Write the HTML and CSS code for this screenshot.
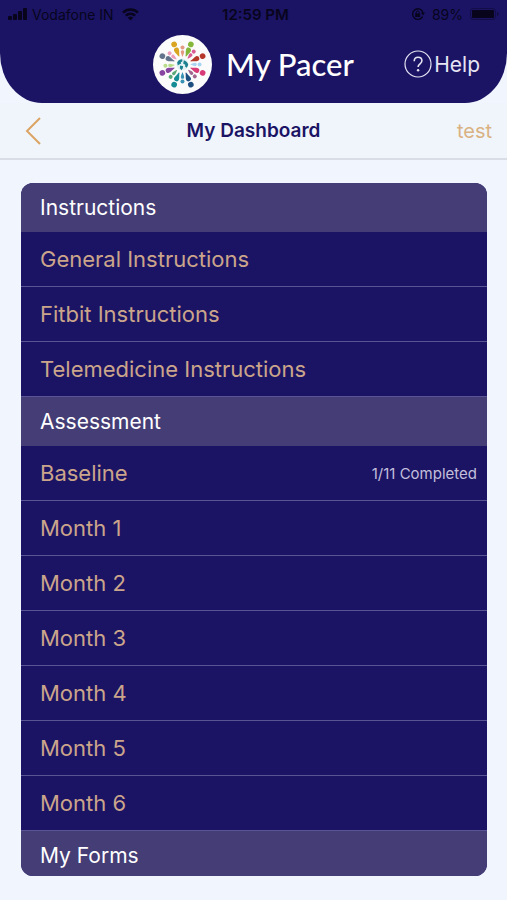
FILE: index.html
```
<!DOCTYPE html>
<html lang="en">
<head>
<meta charset="UTF-8">
<meta name="viewport" content="width=device-width, initial-scale=1">
<title>My Pacer</title>
<link rel="stylesheet" href="styles.css">
</head>
<body>
  <header class="header">
    <div class="status">
      <div class="status-left">
        <svg width="20" height="12" viewBox="0 0 20 12" fill="currentColor">
          <rect x="0" y="8" width="4" height="4" rx="1"/>
          <rect x="5" y="6" width="4" height="6" rx="1"/>
          <rect x="10" y="3" width="4" height="9" rx="1"/>
          <rect x="15" y="0" width="4" height="12" rx="1"/>
        </svg>
        <span>Vodafone IN</span>
        <svg class="wifi" width="17" height="13" viewBox="0 0 17 13" fill="none" stroke="currentColor" stroke-width="2.4">
          <path d="M1 4.6a10.8 10.8 0 0 1 15 0"/>
          <path d="M3.8 7.6a6.8 6.8 0 0 1 9.4 0"/>
          <path d="M8.5 12.6 5.7 9.8a4 4 0 0 1 5.6 0z" fill="currentColor" stroke="none"/>
        </svg>
      </div>
      <div class="status-time">12:59 PM</div>
      <div class="status-right">
        <svg width="14" height="14" viewBox="0 0 14 14" fill="none" stroke="currentColor" stroke-width="1.4">
          <path d="M11.6 9.6A5.3 5.3 0 1 1 12 5.6"/>
          <path d="M10 5.6h4l-2 3z" fill="currentColor" stroke="none"/>
          <rect x="4.2" y="6.4" width="5" height="3.6" fill="currentColor" stroke="none"/>
          <path d="M5.2 6.6V5.4a1.5 1.5 0 0 1 3 0v1.2" stroke-width="1"/>
        </svg>
        <span>89%</span>
        <svg width="29" height="12" viewBox="0 0 29 12">
          <rect x="0.5" y="0.5" width="25" height="11" rx="3" fill="none" stroke="currentColor" stroke-opacity="0.4"/>
          <rect x="2" y="2" width="22" height="8" rx="1" fill="currentColor"/>
          <path d="M27 4c2 .6 2 3.4 0 4z" fill="currentColor" fill-opacity="0.5"/>
        </svg>
      </div>
    </div>
    <div class="brand-row">
      <div class="brand">
        <svg class="logo" viewBox="-88 -88 176 176">
          <defs>
            <g id="big">
              <circle cy="-65" r="8.5"/>
              <path d="M-7.5-47c0-9 15-9 15 0 0 7-5 13-6.500 21h-2c-1.500-8-6.500-14-6.500-21z"/>
            </g>
            <g id="small">
              <circle cy="-51" r="6"/>
              <path d="M-5-38c0-6 10-6 10 0 0 5-3 9-4 14h-2c-1-5-4-9-4-14z"/>
            </g>
          </defs>
          <circle r="88" fill="#fbfbfb"/>
          <use href="#big" transform="rotate(22.5)" fill="#84b63a"/>
          <use href="#big" transform="rotate(67.5)" fill="#b5382b"/>
          <use href="#big" transform="rotate(112.5)" fill="#d83b78"/>
          <use href="#big" transform="rotate(157.5)" fill="#1f4f80"/>
          <use href="#big" transform="rotate(202.5)" fill="#168c94"/>
          <use href="#big" transform="rotate(247.5)" fill="#8744a0"/>
          <use href="#big" transform="rotate(292.5)" fill="#63748c"/>
          <use href="#big" transform="rotate(337.5)" fill="#d9a520"/>
          <use href="#small" fill="#e59a83"/>
          <use href="#small" transform="rotate(41)" fill="#d95a94"/>
          <use href="#small" transform="rotate(90)" fill="#a9d3f2"/>
          <use href="#small" transform="rotate(134)" fill="#a1668f"/>
          <use href="#small" transform="rotate(180)" fill="#3a93b5"/>
          <use href="#small" transform="rotate(224)" fill="#5aa878"/>
          <use href="#small" transform="rotate(266)" fill="#b9dc8a"/>
          <use href="#small" transform="rotate(311)" fill="#ee9dbb"/>
          <circle r="18" fill="#e2f1f3"/>
          <path d="M-16-6c3-7 9-10 15-10l1 6-5 3 1 4-6 3-4 3zM-7 3l9 2-1 6-4 6-5-6zM4-13c7 2 12 7 13 14l-4 9-5-3v-6l-6-4z" fill="#1d8090"/>
        </svg>
        <h1>My Pacer</h1>
      </div>
      <a class="help" href="#">
        <svg width="28" height="28" viewBox="0 0 28 28" fill="none" stroke="currentColor">
          <circle cx="14" cy="14" r="13" stroke-width="1.2"/>
          <path d="M10.2 11.2c0-2.400 1.600-3.900 3.900-3.900s3.800 1.400 3.800 3.500c0 3-3.800 3.100-3.800 6.200" stroke-width="1.6"/>
          <circle cx="14.1" cy="20.3" r="1.2" fill="currentColor" stroke="none"/>
        </svg>
        <span>Help</span>
      </a>
    </div>
  </header>

  <nav class="title-bar">
    <a class="back" href="#" aria-label="Back">
      <svg width="16" height="28" viewBox="0 0 16 28" fill="none" stroke="currentColor" stroke-width="2">
        <path d="M15 1 2 14l13 13"/>
      </svg>
    </a>
    <h2>My Dashboard</h2>
    <a class="user" href="#">test</a>
  </nav>

  <main class="list">
    <h3>Instructions</h3>
    <ul>
      <li><a href="#">General Instructions</a></li>
      <li><a href="#">Fitbit Instructions</a></li>
      <li><a href="#">Telemedicine Instructions</a></li>
    </ul>
    <h3>Assessment</h3>
    <ul>
      <li><a href="#">Baseline <small>1/11 Completed</small></a></li>
      <li><a href="#">Month 1</a></li>
      <li><a href="#">Month 2</a></li>
      <li><a href="#">Month 3</a></li>
      <li><a href="#">Month 4</a></li>
      <li><a href="#">Month 5</a></li>
      <li><a href="#">Month 6</a></li>
    </ul>
    <h3>My Forms</h3>
  </main>
</body>
</html>
```
FILE: styles.css
```
* {
  box-sizing: border-box;
}
body {
  margin: 0;
  font-family: Inter, "Liberation Sans", sans-serif;
  background: #f1f5fd;
  color: #1b1464;
}
h1, h2, h3, ul {
  margin: 0;
  padding: 0;
  font-weight: 400;
}
a {
  color: inherit;
  text-decoration: none;
}
svg {
  display: block;
  flex: none;
}
.header {
  height: 103px;
  background: #1b1464;
  border-radius: 0 0 42px 42px / 0 0 50px 50px;
}

/* phone status bar */
.status {
  display: grid;
  grid-template-columns: 1fr auto 1fr;
  align-items: center;
  height: 28px;
  padding: 0 8px;
  font-size: 14px;
  color: #07041c;
}
.status-left, .status-right {
  display: flex;
  align-items: center;
  gap: 4px;
}
.status-left .wifi {
  margin-left: 4px;
}
.status-right {
  justify-content: flex-end;
  gap: 7px;
}
.status-time {
  padding-left: 4px;
  font-size: 15px;
  font-weight: 600;
}

.brand-row {
  display: grid;
  grid-template-columns: 1fr auto 1fr;
  align-items: center;
  height: 72px;
  padding: 0 27px;
}
.brand {
  grid-column: 2;
  display: flex;
  align-items: center;
  gap: 14px;
}
.logo {
  width: 59px;
  height: 59px;
}
h1 {
  font-family: Lato, sans-serif;
  font-size: 31px;
  font-weight: 500;
  color: #fff;
}
.help {
  display: flex;
  align-items: center;
  justify-self: end;
  gap: 2px;
  font-size: 21px;
  color: #e6e4f3;
}

.title-bar {
  display: grid;
  grid-template-columns: 1fr auto 1fr;
  align-items: center;
  height: 57px;
  padding: 0 15px 0 25px;
  border-bottom: 2px solid #d9dee6;
  background: #f0f5fc;
}
.title-bar h2 {
  margin-right: 10px;
  font-size: 19px;
  font-weight: 600;
}
.back {
  justify-self: start;
  color: #dba465;
}
.user {
  justify-self: end;
  font-size: 20px;
  color: #d9b283;
}

.list {
  margin: 23px 20px 24px 21px;
  border-radius: 12px;
  overflow: hidden;
  background: #1b1464;
}
.list h3 {
  height: 49px;
  padding: 0 19px;
  font-size: 21px;
  line-height: 49px;
  color: #fff;
  background: #443d76;
}
.list h3:last-child {
  height: 45px;
}
.list ul {
  list-style: none;
}
.list a {
  display: flex;
  align-items: center;
  justify-content: space-between;
  height: 55px;
  padding: 0 10px 0 19px;
  border-bottom: 1px solid #5a5394;
  font-size: 22px;
  color: #cba58b;
}
.list small {
  font-size: 15px;
  color: #c3bfdc;
}
```
